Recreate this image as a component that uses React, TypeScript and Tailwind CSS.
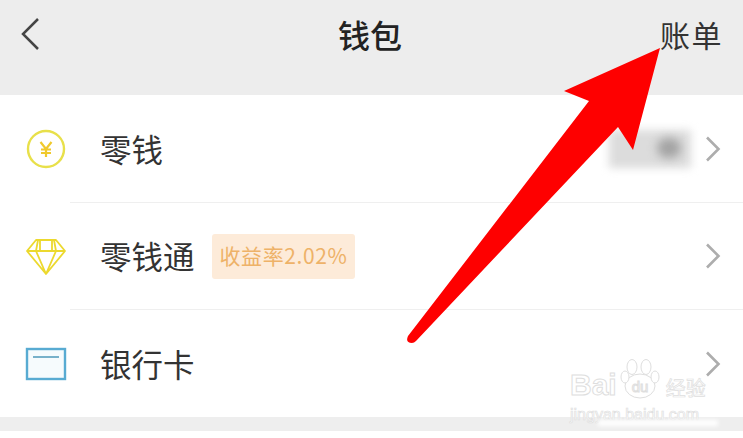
const Chevron = ({ push = true }: { push?: boolean }) => (
  <svg width="16" height="28" viewBox="0 0 16 28" fill="none" className={push ? "ml-auto shrink-0" : "shrink-0"}>
    <path d="M2 2.5 L13.5 14 L2 25.5" stroke="#adadad" strokeWidth="2.6" />
  </svg>
);

const CoinIcon = () => (
  <svg width="42" height="42" viewBox="0 0 42 42" fill="none">
    <circle cx="21" cy="21" r="18" stroke="#e8e04a" strokeWidth="2.4" />
    <path d="M15.5 14 L21 21 L26.5 14 M21 21 V29 M16 21.5 H26 M16 25 H26" stroke="#f0c92c" strokeWidth="2.2" />
  </svg>
);

const DiamondIcon = () => (
  <svg width="42" height="38" viewBox="0 0 42 38" fill="none">
    <path
      d="M11 2 H31 L40 13 L21 36 L2 13 Z M2 13 H40 M13 2 L11 13 L21 36 L31 13 L29 2 M15 2 V13 M27 2 V13"
      stroke="#ecd92e"
      strokeWidth="1.8"
      strokeLinejoin="round"
    />
  </svg>
);

const CardIcon = () => (
  <svg width="42" height="34" viewBox="0 0 42 34" fill="none">
    <rect x="2" y="2" width="38" height="30" stroke="#58abd2" strokeWidth="2.4" fill="#f6fbfd" />
    <path d="M8 10 H34" stroke="#6aa9c4" strokeWidth="1.8" />
  </svg>
);

const Row = ({
  icon,
  label,
  height,
  children,
  divider,
}: {
  icon: React.ReactNode;
  label: string;
  height: string;
  children?: React.ReactNode;
  divider?: boolean;
}) => (
  <div className={`flex items-stretch ${height}`}>
    <div className="flex w-[70px] shrink-0 items-center pl-[25px]">{icon}</div>
    <div className={`flex flex-1 items-center pl-[30px] pr-[22px] ${divider ? "border-b border-[#efefef]" : ""}`}>
      <span className="text-[31.5px] leading-none text-[#333]">{label}</span>
      {children}
    </div>
  </div>
);

export default function App() {
  return (
    <div className="relative h-[438px] w-[743px] overflow-hidden bg-white font-['Noto_Sans_CJK_SC','Noto_Sans',sans-serif]">
      <header className="grid h-[95px] grid-cols-[1fr_auto_1fr] items-start bg-[#ededed] pl-[20px] pr-[20px] pt-[15px]">
        <svg width="22" height="36" viewBox="0 0 22 36" fill="none" className="mt-[2px]">
          <path d="M18 2 L3 17 L18 32" stroke="#444" strokeWidth="2.5" />
        </svg>
        <h1 className="mr-[3px] text-[32px] font-medium leading-[38px] text-[#222]">钱包</h1>
        <span className="justify-self-end text-[30px] leading-[38px] tracking-[1.5px] text-[#333]">账单</span>
      </header>

      <Row icon={<CoinIcon />} label="零钱" height="h-[108px]" divider>
        <div className="relative ml-auto mr-[14px] h-[38px] w-[82px]">
          <div className="absolute inset-0 bg-[#dcdcdc] blur-[4px]" />
          <div className="absolute left-[48px] top-[8px] h-[20px] w-[24px] rounded-full bg-[#a3a3a3] blur-[5px]" />
        </div>
        <Chevron push={false} />
      </Row>
      <Row icon={<DiamondIcon />} label="零钱通" height="h-[107px]" divider>
        <span className="ml-[17px] flex h-[45px] items-center rounded-[3px] bg-[#fdebd9] px-[8px] text-[21px] tracking-[0.6px] text-[#eeb268]">
          收益率2.02%
        </span>
        <Chevron />
      </Row>
      <Row icon={<CardIcon />} label="银行卡" height="h-[107px]">
        <Chevron />
      </Row>

      <div className="h-[14px] bg-[#eeeeee]" />

      {/* arrow annotation */}
      <svg width="743" height="438" viewBox="0 0 743 438" className="absolute inset-0">
        <path
          d="M660 48 L564 91 L589 101 L408 336 Q405 343 412 343 Q414 343 416 341 L618 127 L633 150 Z"
          fill="#fe0000"
        />
      </svg>

      {/* watermark */}
      <div className="absolute left-[570px] top-[357px] flex w-[134px] flex-col text-white [-webkit-text-stroke:1px_#dedede]">
        <div className="flex h-[43px] items-end whitespace-nowrap">
          <span className="font-['Liberation_Sans',sans-serif] text-[30px] font-bold leading-[30px]">Bai</span>
          <svg width="40" height="42" viewBox="0 0 40 42" fill="white" stroke="#dedede" className="ml-[3px] shrink-0">
            <ellipse cx="20" cy="28" rx="15" ry="12" />
            <ellipse cx="12" cy="9" rx="5" ry="7.5" />
            <ellipse cx="26" cy="9" rx="5" ry="7.5" />
            <ellipse cx="5" cy="19" rx="4" ry="6" />
            <ellipse cx="35" cy="19" rx="4" ry="6" />
            <text x="20" y="34" textAnchor="middle" fontSize="15" fontFamily="Liberation Sans">du</text>
          </svg>
          <span className="ml-[6px] text-[20px] leading-[24px] [-webkit-text-stroke:0.7px_#dedede]">经验</span>
        </div>
        <span className="mt-[7px] whitespace-nowrap font-['Liberation_Sans',sans-serif] text-[16px] leading-[16px] [-webkit-text-stroke:0.7px_#dedede]">
          jingyan.baidu.com
        </span>
      </div>

      {/* white smudge left on the band by the watermark removal */}
      <div className="absolute left-[598px] top-[420px] h-[6px] w-[120px] bg-white blur-[2px]" />
    </div>
  );
}
